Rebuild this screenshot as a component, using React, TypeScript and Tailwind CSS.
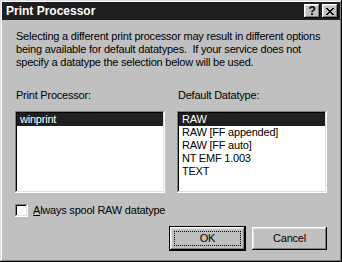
import React from "react";

const raised =
  "shadow-[inset_-1px_-1px_#000,inset_1px_1px_#fff,inset_-2px_-2px_#808080,inset_2px_2px_#dfdfdf]";
const sunken =
  "shadow-[inset_-1px_-1px_#fff,inset_1px_1px_#808080,inset_-2px_-2px_#dfdfdf,inset_2px_2px_#000]";

function ListBox({ items }: { items: string[] }) {
  return (
    <div className={`h-[82px] bg-white p-[2px] ${sunken}`}>
      {items.map((item, idx) => (
        <div
          key={item}
          className={`h-[13px] leading-[13px] pl-[3px] whitespace-nowrap ${
            idx === 0 ? "bg-[#1f1f1f] text-white" : "text-black"
          }`}
        >
          {item}
        </div>
      ))}
    </div>
  );
}

export default function App() {
  return (
    <div
      className="w-[342px] h-[262px] bg-[#c0c0c0] p-[2px] flex flex-col text-[11px] tracking-[-0.22px] text-black shadow-[inset_-1px_-1px_#000,inset_1px_1px_#dfdfdf,inset_-2px_-2px_#808080,inset_2px_2px_#fff]"
      style={{ fontFamily: '"Liberation Sans", Arial, sans-serif' }}
    >
      {/* title bar */}
      <div className="h-[18px] bg-[#1f1f1f] flex items-center pl-[4px] pr-[2px]">
        <span className="flex-1 text-white font-bold text-[12px] tracking-normal leading-none">Print Processor</span>
        <div className="flex gap-[2px]">
          <div
            className={`w-[16px] h-[14px] bg-[#c0c0c0] flex items-center justify-center font-bold text-[12px] leading-none ${raised}`}
          >
            ?
          </div>
          <div className={`w-[16px] h-[14px] bg-[#c0c0c0] flex items-center justify-center ${raised}`}>
            <svg width="8" height="7" viewBox="0 0 8 7" shapeRendering="crispEdges">
              <path d="M0 0h2v1H0zM6 0h2v1H6zM1 1h2v1H1zM5 1h2v1H5zM2 2h4v1H2zM3 3h2v1H3zM2 4h4v1H2zM1 5h2v1H1zM5 5h2v1H5zM0 6h2v1H0zM6 6h2v1H6z" fill="#000" />
            </svg>
          </div>
        </div>
      </div>

      <div className="flex-1 flex flex-col px-[13px]">
        <p className="mt-[10px] pl-[1px] leading-[13px] whitespace-nowrap">
          Selecting a different print processor may result in different options
          <br />
          being available for default datatypes.&nbsp; If your service does not
          <br />
          specify a datatype the selection below will be used.
        </p>

        <div className="mt-[20px] grid grid-cols-2 gap-x-[12px]">
          <div className="flex flex-col">
            <div className="h-[13px] leading-[13px] pl-[1px]">Print Processor:</div>
            <div className="mt-[9px]">
              <ListBox items={["winprint"]} />
            </div>
          </div>
          <div className="flex flex-col">
            <div className="h-[13px] leading-[13px] pl-[1px]">Default Datatype:</div>
            <div className="mt-[9px]">
              <ListBox items={["RAW", "RAW [FF appended]", "RAW [FF auto]", "NT EMF 1.003", "TEXT"]} />
            </div>
          </div>
        </div>

        <div className="mt-[11px] flex items-center gap-[5px]">
          <div className={`w-[13px] h-[13px] bg-white ${sunken}`} />
          <span className="leading-[13px]">
            <span className="underline">A</span>lways spool RAW datatype
          </span>
        </div>

        <div className="mt-[9px] flex justify-end items-center gap-[6px]">
          <div className="w-[77px] h-[25px] border border-black">
            <div className={`w-full h-full flex items-center justify-center p-[4px] ${raised}`}>
              <div className="w-full h-full border border-dotted border-black flex items-center justify-center">
                OK
              </div>
            </div>
          </div>
          <div className={`w-[75px] h-[23px] flex items-center justify-center ${raised}`}>Cancel</div>
        </div>
      </div>
    </div>
  );
}
